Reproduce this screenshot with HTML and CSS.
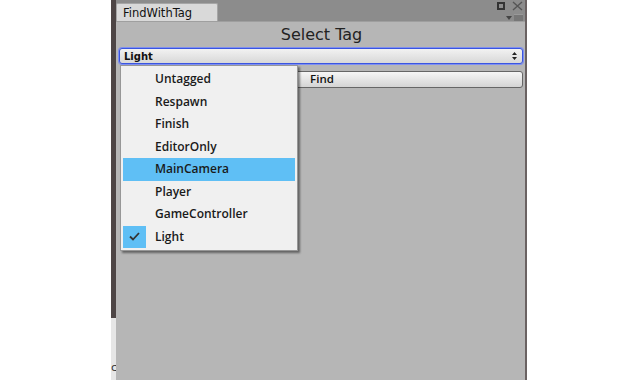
FILE: index.html
```html
<!DOCTYPE html>
<html lang="en">
<head>
    <meta charset="UTF-8">
    <title>FindWithTag</title>
    <link rel="stylesheet" href="styles.css">
</head>
<body>
    <div class="window">
        <div class="edge">
            <span class="edge-top"></span>
            <span class="edge-bottom">c</span>
        </div>
        <div class="panel">
            <div class="tabbar">
                <div class="tab">FindWithTag</div>
                <div class="tab-icons">
                    <div class="icon-row">
                        <span class="max-icon"></span>
                        <svg width="11" height="10" viewBox="0 0 11 10"><path d="M1 1 L10 9 M10 1 L1 9" stroke="#555" stroke-width="1.4"/></svg>
                    </div>
                    <div class="icon-row menu-row">
                        <svg width="6" height="4" viewBox="0 0 6 4"><path d="M0 0 L6 0 L3 4 Z" fill="#444"/></svg>
                        <span class="lines-icon"></span>
                    </div>
                </div>
            </div>
            <div class="content">
                <div class="title">Select Tag</div>
                <div class="select">
                    <span>Light</span>
                    <svg width="5" height="8" viewBox="0 0 5 8"><path d="M0 3 L2.5 0 L5 3 Z M0 5 L2.5 8 L5 5 Z" fill="#222"/></svg>
                </div>
                <div class="find-row">
                    <button class="find">Find</button>
                </div>

                <ul class="menu">
                    <li class="item">Untagged</li>
                    <li class="item">Respawn</li>
                    <li class="item">Finish</li>
                    <li class="item">EditorOnly</li>
                    <li class="item hover">MainCamera</li>
                    <li class="item">Player</li>
                    <li class="item">GameController</li>
                    <li class="item checked">
                        <span class="check">
                            <svg width="11" height="9" viewBox="0 0 11 9"><path d="M1 4.5 L4 7.5 L10 1" stroke="#333" stroke-width="1.8" fill="none"/></svg>
                        </span>
                        Light
                    </li>
                </ul>
            </div>
        </div>
    </div>
</body>
</html>
```

FILE: styles.css
```css
body{
    margin:0;
    padding:0;
    background-color:#ffffff;
    font-family:"DejaVu Sans", Verdana, sans-serif;
}
.window{
    display:flex;
    margin-left:111px;
    width:416px;
    height:380px;
}
.edge{
    width:5px;
    display:flex;
    flex-direction:column;
}
.edge-top{
    flex:1;
    background-color:#4d4545;
}
.edge-bottom{
    height:62px;
    background-color:#e6e6e6;
    font-size:11px;
    color:#333;
    padding-top:44px;
    box-sizing:border-box;
    line-height:12px;
}
.panel{
    flex:1;
    display:flex;
    flex-direction:column;
    background-color:#b6b6b6;
    border-right:2px solid #6a6262;
}
.tabbar{
    height:21px;
    background-color:#8c8c8c;
    display:flex;
    justify-content:space-between;
    border-bottom:1px solid #9f9f9f;
}
.tab{
    margin-top:3px;
    width:102px;
    background-color:#d9d9d9;
    border:1px solid #a6a6a6;
    border-bottom:none;
    border-radius:2px 2px 0 0;
    font-size:11.5px;
    color:#111;
    padding:2px 0 0 6px;
    box-sizing:border-box;
}
.tab-icons{
    display:flex;
    flex-direction:column;
    align-items:flex-end;
    padding:1px 2px 0 0;
}
.icon-row{
    display:flex;
    align-items:center;
    gap:7px;
}
.max-icon{
    width:4px;
    height:4px;
    border:2px solid #333;
}
.menu-row{
    gap:2px;
    margin-top:3px;
}
.lines-icon{
    width:9px;
    height:6px;
    background-color:#777;
    border-top:1px solid #999;
}
.content{
    position:relative;
    flex:1;
    padding:0 2px 0 3px;
}
.title{
    text-align:center;
    font-size:16px;
    color:#222;
    height:26px;
    line-height:26px;
    padding-left:1px;
}
.select{
    height:14px;
    border:1px solid #3a55e0;
    border-radius:3px;
    box-shadow:0 0 0 1px #7f8ff0;
    background:linear-gradient(#f2f2f2, #d8d8d8);
    display:flex;
    align-items:center;
    justify-content:space-between;
    padding:0 5px 0 4px;
    font-size:10px;
    font-weight:bold;
    color:#111;
}
.find-row{
    margin-top:4px;
    padding-left:2px;
}
.find{
    width:100%;
    height:17px;
    border:1px solid #666;
    border-radius:3px;
    background:linear-gradient(#f6f6f6, #d4d4d4);
    font-family:"Open Sans", "DejaVu Sans", sans-serif;
    font-weight:600;
    font-size:11.5px;
    color:#111;
    padding:0;
    line-height:14px;
}
.menu{
    position:absolute;
    left:4px;
    top:43px;
    width:176px;
    margin:0;
    padding:2px 0;
    list-style:none;
    background-color:#f0f0f0;
    border:1px solid #979797;
    box-shadow:2px 2px 2px rgba(0,0,0,0.45);
}
.item{
    position:relative;
    height:22.5px;
    line-height:22.5px;
    margin:0 2px;
    padding-left:32px;
    font-family:"Open Sans", "DejaVu Sans", sans-serif;
    font-weight:600;
    font-size:12px;
    color:#1a1a1a;
}
.hover{
    background-color:#5fbff5;
}
.check{
    position:absolute;
    left:0;
    top:0;
    width:23px;
    height:22px;
    background-color:#5fbff5;
    display:flex;
    align-items:center;
    justify-content:center;
}
```
